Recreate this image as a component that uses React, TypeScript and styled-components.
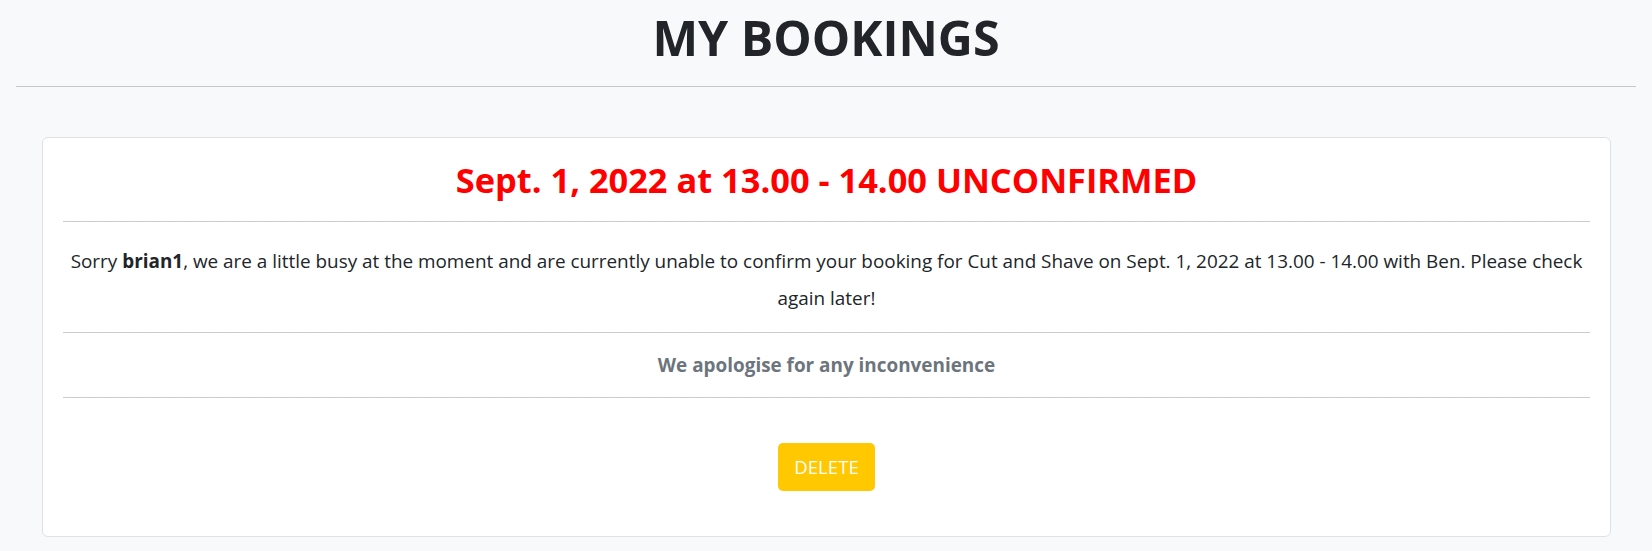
import React from "react";
import styled, { createGlobalStyle } from "styled-components";

const GlobalStyle = createGlobalStyle`
  *, *::before, *::after { box-sizing: border-box; }
  body {
    margin: 0;
    background: #f8f9fa;
    color: #212529;
    font-family: "Open Sans", "Noto Sans", sans-serif;
  }
`;

const Page = styled.main`
  padding: 0 16px 14px;
`;

const Title = styled.h1`
  margin: 0;
  padding: 8px 0 20px;
  font-size: 48.4px;
  line-height: 1.2;
  font-weight: 700;
  text-align: center;
  color: #212529;
`;

const Rule = styled.hr<{ $tone?: string }>`
  margin: 0;
  border: 0;
  border-top: 1px solid ${(p) => p.$tone ?? "#c6c7c8"};
`;

const Card = styled.section`
  margin: 50px 25px 0 26px;
  padding: 0 20px;
  background: #fff;
  border: 1px solid #dfe1e3;
  border-radius: 6px;
  text-align: center;
`;

const Heading = styled.h2`
  margin: 0;
  padding: 20.7px 0 21px;
  font-size: 34.4px;
  line-height: 1.2;
  font-weight: 700;
  color: #ff0000;
`;

const Message = styled.p`
  margin: 0;
  padding: 20.5px 0 15.5px;
  font-size: 18.9px;
  line-height: 37px;
  color: #212529;
`;

const Note = styled.p`
  margin: 0;
  padding: 18px 0;
  font-size: 18.9px;
  line-height: 1.5;
  font-weight: 700;
  color: #6c757d;
`;

const Actions = styled.div`
  display: flex;
  justify-content: center;
  padding: 45px 0 45px;
`;

const DeleteButton = styled.button`
  height: 48px;
  padding: 0 16px;
  border: 0;
  border-radius: 5px;
  background: #ffc800;
  color: #fff;
  font-family: inherit;
  font-size: 18.6px;
  line-height: 1.5;
  cursor: pointer;
`;

export default function App() {
  return (
    <>
      <GlobalStyle />
      <Page>
        <Title>MY BOOKINGS</Title>
        <Rule />
        <Card>
          <Heading>Sept. 1, 2022 at 13.00 - 14.00 UNCONFIRMED</Heading>
          <Rule $tone="#cbcccd" />
          <Message>
            Sorry <strong>brian1</strong>, we are a little busy at the moment and are currently
            unable to confirm your booking for Cut and Shave on Sept. 1, 2022 at 13.00 - 14.00 with
            Ben. Please check again later!
          </Message>
          <Rule $tone="#cbcccd" />
          <Note>We apologise for any inconvenience</Note>
          <Rule $tone="#cbcccd" />
          <Actions>
            <DeleteButton type="button">DELETE</DeleteButton>
          </Actions>
        </Card>
      </Page>
    </>
  );
}
